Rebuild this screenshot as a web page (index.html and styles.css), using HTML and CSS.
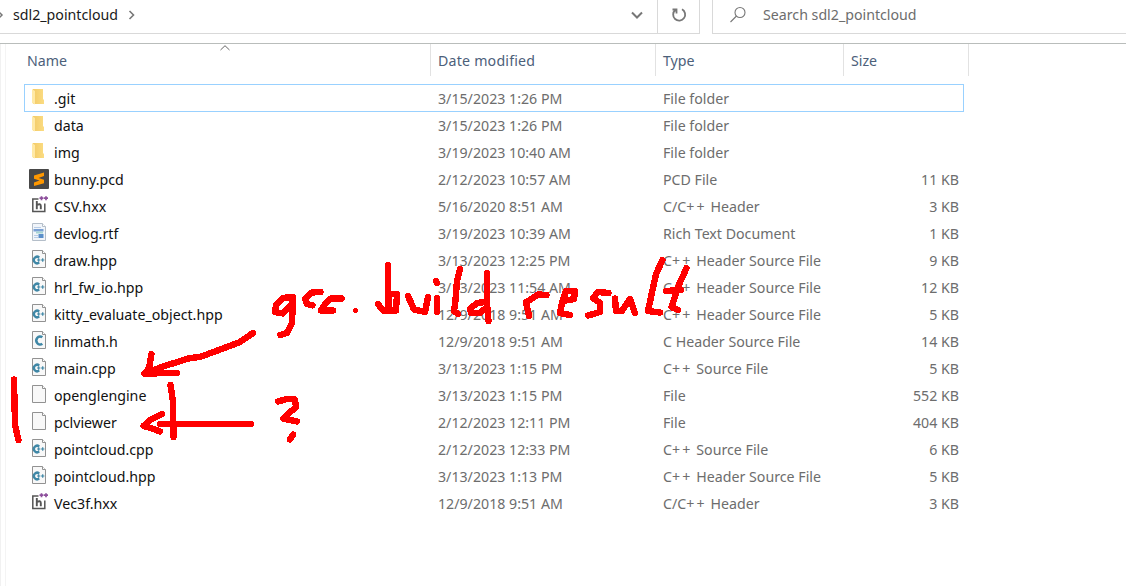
FILE: index.html
```html
<!DOCTYPE html>
<html lang="en">
<head>
<meta charset="utf-8">
<title>sdl2_pointcloud</title>
<link rel="stylesheet" href="styles.css">
</head>
<body>
<svg class="sprite" aria-hidden="true">
  <defs>
    <linearGradient id="fold" x1="0" x2="1"><stop offset="0" stop-color="#f3cb68"/><stop offset="1" stop-color="#fbdc82"/></linearGradient>
    <symbol id="folder" viewBox="0 0 20 20"><path d="M4 1h10v10l1 1v4H4z" fill="url(#fold)"/><path d="M3 1l3 2v13.500L3 15z" fill="#ffe9a6"/></symbol>
    <symbol id="page" viewBox="0 0 20 20"><path d="M3.500.500h10l3 3v14h-13z" fill="#f8f8f8" stroke="#929292"/><path d="M13.500.500v3h3" fill="#fff" stroke="#929292"/></symbol>
    <symbol id="cpp" viewBox="0 0 20 20"><use href="#page"/><path d="M10.200 7.600A3.200 3.200 0 1 0 10.200 12.400" fill="none" stroke="#3f87a6" stroke-width="2.400"/><path d="M8 10h3.400M9.700 8.300v3.400M12 10h3.400M13.700 8.300v3.400" stroke="#3f87a6" stroke-width="1.200"/></symbol>
    <symbol id="ch" viewBox="0 0 20 20"><use href="#page"/><path d="M13.300 6.300A3.700 4 0 1 0 13.300 12.700" fill="none" stroke="#3f87a6" stroke-width="2.500"/></symbol>
    <symbol id="sublime" viewBox="0 0 20 20"><rect width="20" height="20" rx="1" fill="#484848"/><path d="M15 3.500v3.500l-5.500 2 5.500 1.700v3.600L5 17v-3.500l5.500-2L5 9.700V6.500z" fill="#ff9800"/></symbol>
    <symbol id="hxx" viewBox="0 0 20 20"><path d="M9.500 3H3.800v12.500h12V7.500" fill="none" stroke="#555" stroke-width="1.500"/><path d="M7.800 5v8.300M7.800 9q4-2 4 1v3.300" fill="none" stroke="#555" stroke-width="1.900"/><path d="M10.500 2.200h4M12.500.200v4M15 2.200h4M17 .200v4" stroke="#8d4f9c" stroke-width="1.700"/></symbol>
    <symbol id="rtf" viewBox="0 0 20 20"><path d="M3.500.500h10l3 3v14h-13z" fill="#f1f5fa" stroke="#b4bec9"/><path d="M13.500.500v3h3" fill="#fff" stroke="#b4bec9"/><path d="M5 4.500h7M5 12.500h4M5 14.500h4" stroke="#b9cde6"/><path d="M4.500 6h10v2.500h-10z" fill="#7aa0d4"/><path d="M7 8.500h7v2H7z" fill="#a7d5d3"/><path d="M9.500 11h5v4h-5z" fill="#5a8fca"/></symbol>
  </defs>
</svg>

<header class="toolbar">
  <div class="address">
    <svg class="edge" viewBox="0 0 4 10"><path d="M-2 1l4 4-4 4" /></svg>
    <span class="crumb">sdl2_pointcloud</span>
    <svg class="chev" viewBox="0 0 8 10"><path d="M1.500 1l4 4-4 4"/></svg>
    <svg class="drop" viewBox="0 0 12 8"><path d="M1 1.500l5 5 5-5"/></svg>
  </div>
  <div class="refresh"><svg viewBox="0 0 16 16"><path d="M4.300 3A6 6 0 1 0 11 2.300M1.500 2.500h4v4"/></svg></div>
  <div class="search">
    <svg viewBox="0 0 18 18"><circle cx="11" cy="6.500" r="5"/><path d="M7.500 10L1.500 16"/></svg>
    <span>Search sdl2_pointcloud</span>
  </div>
</header>

<main class="pane">
  <div class="head">
    <div class="h-name">Name<svg class="sort" viewBox="0 0 10 6"><path d="M.500 5L5 .700 9.500 5"/></svg></div>
    <div class="h-date">Date modified</div><div>Type</div><div>Size</div>
  </div>
  <div class="files">
    <div class="row selected"><svg><use href="#folder"/></svg><b>.git</b><span>3/15/2023 1:26 PM</span><span>File folder</span><i></i></div>
    <div class="row"><svg><use href="#folder"/></svg><b>data</b><span>3/15/2023 1:26 PM</span><span>File folder</span><i></i></div>
    <div class="row"><svg><use href="#folder"/></svg><b>img</b><span>3/19/2023 10:40 AM</span><span>File folder</span><i></i></div>
    <div class="row"><svg><use href="#sublime"/></svg><b>bunny.pcd</b><span>2/12/2023 10:57 AM</span><span>PCD File</span><i>11 KB</i></div>
    <div class="row"><svg><use href="#hxx"/></svg><b>CSV.hxx</b><span>5/16/2020 8:51 AM</span><span>C/C<em>++</em> Header</span><i>3 KB</i></div>
    <div class="row"><svg><use href="#rtf"/></svg><b>devlog.rtf</b><span>3/19/2023 10:39 AM</span><span>Rich Text Document</span><i>1 KB</i></div>
    <div class="row"><svg><use href="#cpp"/></svg><b>draw.hpp</b><span>3/13/2023 12:25 PM</span><span>C<em>++</em> Header Source File</span><i>9 KB</i></div>
    <div class="row"><svg><use href="#cpp"/></svg><b>hrl_fw_io.hpp</b><span>3/13/2023 11:54 AM</span><span>C<em>++</em> Header Source File</span><i>12 KB</i></div>
    <div class="row"><svg><use href="#cpp"/></svg><b>kitty_evaluate_object.hpp</b><span>12/9/2018 9:51 AM</span><span>C<em>++</em> Header Source File</span><i>5 KB</i></div>
    <div class="row"><svg><use href="#ch"/></svg><b>linmath.h</b><span>12/9/2018 9:51 AM</span><span>C Header Source File</span><i>14 KB</i></div>
    <div class="row"><svg><use href="#cpp"/></svg><b>main.cpp</b><span>3/13/2023 1:15 PM</span><span>C<em>++</em> Source File</span><i>5 KB</i></div>
    <div class="row"><svg><use href="#page"/></svg><b>openglengine</b><span>3/13/2023 1:15 PM</span><span>File</span><i>552 KB</i></div>
    <div class="row"><svg><use href="#page"/></svg><b>pclviewer</b><span>2/12/2023 12:11 PM</span><span>File</span><i>404 KB</i></div>
    <div class="row"><svg><use href="#cpp"/></svg><b>pointcloud.cpp</b><span>2/12/2023 12:33 PM</span><span>C<em>++</em> Source File</span><i>6 KB</i></div>
    <div class="row"><svg><use href="#cpp"/></svg><b>pointcloud.hpp</b><span>3/13/2023 1:13 PM</span><span>C<em>++</em> Header Source File</span><i>5 KB</i></div>
    <div class="row"><svg><use href="#hxx"/></svg><b>Vec3f.hxx</b><span>12/9/2018 9:51 AM</span><span>C/C<em>++</em> Header</span><i>3 KB</i></div>
  </div>
</main>

<svg class="ink" viewBox="0 0 1126 586" shape-rendering="crispEdges">
  <!-- side bars and arrows -->
  <path d="M14 379.500L15 425 18.500 440M170.500 385L173 402 173.500 437"/>
  <path d="M253 333L239 342.500 200 357 190 358 163 366.500 144.500 373.500M151.500 354L149 368 145 373.500 177 373"/>
  <path d="M160 424H251M162 414L151 419.500 143.500 426 154 429 160 431.500"/>
  <path d="M278 401.500L287 399 295 399.500 296 407 283 418.500 297 421.500M293 434.500L290 439.500"/>
  <!-- handwriting -->
  <path d="M292 297L283 298 276 305 275 312 283 313.500 292 304 293 297 292 323 287 333 280.500 335"/>
  <path d="M320.500 292L312 292.500 305 299 307 304 312.500 305.300M341.500 298.500L331 298.500 325 304 321 310.500 333 310.500"/>
  <path class="dot" d="M355.500 310.500h.1"/>
  <path d="M388 265L388.500 309M378 304L383 310.500 396 310.500 397 294 388 294"/>
  <path d="M408 296L414 309.500 425 312 428 297M436 281L437 283M437 298V312"/>
  <path d="M460 269L457 281 455.500 300 454 311 458 314"/>
  <path d="M486 302L477 303 470 309 471 313 480 313 487 307M487 273L487 303 488.500 321"/>
  <path d="M526 302L529 316M527 302L538 294.500 546.500 295"/>
  <path d="M563 301L574 299 575 291 566 291 562 303 560 313 570 315"/>
  <path d="M608.500 293L598 292 593 298 600 303 600 312 588 315.500"/>
  <path d="M615 298.500L616 311 622 311 630 299 635 313"/>
  <path d="M662.500 260L656 274 648 311 660 312.500M686.500 268L678 287 671.500 307 678 310M666 291L681 290"/>
</svg>
</body>
</html>
```
FILE: styles.css
```css
* { box-sizing: border-box; }
body {
  margin: 0;
  width: 1126px;
  height: 586px;
  overflow: hidden;
  position: relative;
  background: #fff;
  color: #6d6d6d;
  font: 14.2px/27px "Noto Sans", "Open Sans", sans-serif;
  white-space: nowrap;
}
.sprite { position: absolute; width: 0; height: 0; }
.toolbar { display: flex; height: 43px; }
.toolbar svg { fill: none; stroke: #777; flex: none; }
.address, .refresh, .search { height: 34px; display: flex; align-items: center; border-bottom: 1px solid #d9d9d9; padding-bottom: 4px; }
.address { width: 657px; }
.edge { width: 4px; height: 10px; stroke-width: 1.5; }
.crumb { margin-left: 9px; color: #1a1a1a; }
.chev { width: 8px; height: 10px; margin-left: 10px; stroke-width: 1.6; }
.drop { width: 12px; height: 8px; margin-left: auto; margin-right: 14px; stroke-width: 2; }
.refresh { width: 43px; border-left: 1px solid #d9d9d9; border-right: 1px solid #d9d9d9; justify-content: center; }
.refresh svg { width: 16px; height: 16px; stroke-width: 1.8; }
.search { width: 414px; margin-left: 12px; border-left: 1px solid #d9d9d9; padding-left: 16px; }
.search svg { width: 18px; height: 18px; margin-right: 16px; stroke-width: 1.1; }
.pane { height: 543px; border-top: 1px solid #b9bdbb; }
.pane::before { content: ""; float: left; width: 4px; height: 542px; border-left: 1px solid #f1f1f1; border-right: 1px solid #f4f4f4; }
.head { display: grid; grid-template-columns: 407px 225px 188px 125px; margin-left: 24px; width: 945px; height: 32px; color: #4c607a; }
.head > div { border-right: 1px solid #e2e2e2; line-height: 34px; padding-left: 7px; height: 32px; }
.head .h-name { padding-left: 3px; display: flex; }
.head .h-date { letter-spacing: .2px; }
.sort { width: 10px; height: 6px; margin: 1px 0 0 153px; fill: none; stroke: #666; }
.files { margin: 8px 0 0 24px; width: 940px; }
.row { display: grid; grid-template-columns: 30px 384px 225px 188px 108px; height: 27px; }
.row svg { width: 20px; height: 20px; margin: 3px 0 0 5px; }
.row b, .row i, .row em { font-weight: 400; font-style: normal; }
.row em { letter-spacing: 2.2px; }
.row b { color: #111; }
.row i { text-align: right; }
.selected { height: 28px; outline: 1px solid #99d1ff; outline-offset: -1px; padding-top: 1px; }
.ink { position: absolute; left: 0; top: 0; width: 1126px; height: 586px; fill: none; stroke: #f00; stroke-width: 6.4; stroke-linecap: round; stroke-linejoin: round; }
.dot { stroke-width: 5; }
```
